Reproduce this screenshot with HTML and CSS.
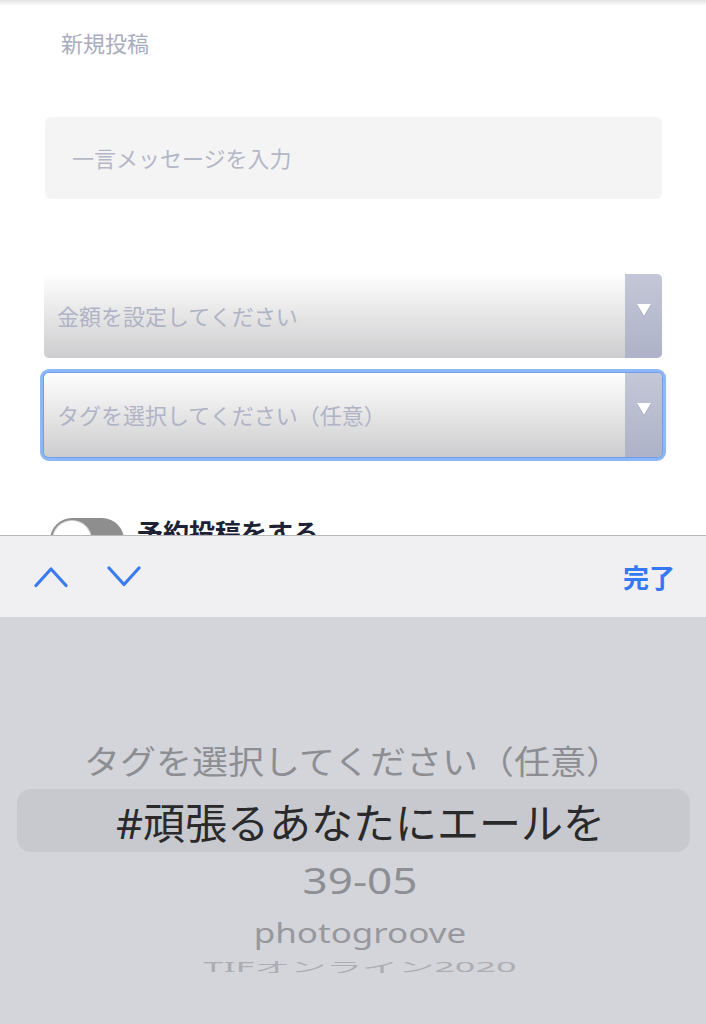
FILE: index.html
```html
<!DOCTYPE html>
<html lang="ja">
<head>
    <meta charset="UTF-8">
    <meta name="viewport" content="width=device-width, initial-scale=1.0">
    <title>新規投稿</title>
    <link rel="stylesheet" href="styles.css">
</head>
<body>
    <div class="top-shadow"></div>

    <main class="post-form">
        <h1 class="form-title">新規投稿</h1>

        <div class="message-box">一言メッセージを入力</div>

        <div class="select-box">
            <span class="select-label">金額を設定してください</span>
            <span class="select-arrow"></span>
        </div>

        <div class="select-box is-focused">
            <span class="select-label">タグを選択してください（任意）</span>
            <span class="select-arrow"></span>
        </div>

        <div class="schedule-row">
            <span class="toggle"><span class="toggle-knob"></span></span>
            <span class="schedule-label">予約投稿をする</span>
        </div>
    </main>

    <!-- iOS keyboard with the tag picker -->
    <div class="keyboard">
        <div class="keyboard-bar">
            <div class="nav-arrows">
                <svg class="nav-arrow" width="34" height="23" viewBox="0 0 34 23">
                    <path d="M2 20.5 L17 4 L32 20.5" />
                </svg>
                <svg class="nav-arrow" width="34" height="23" viewBox="0 0 34 23">
                    <path d="M2 3 L17 19.5 L32 3" />
                </svg>
            </div>
            <span class="done-btn">完了</span>
        </div>

        <div class="picker">
            <div class="picker-row row-near"><span>タグを選択してください（任意）</span></div>
            <div class="picker-row row-selected"><span>#頑張るあなたにエールを</span></div>
            <div class="picker-row row-next"><span>39-05</span></div>
            <div class="picker-row row-far"><span>photogroove</span></div>
            <div class="picker-row row-farthest"><span>TIFオンライン2020</span></div>
        </div>
    </div>
</body>
</html>
```

FILE: styles.css
```css
body {
    margin: 0;
    height: 1024px;
    overflow: hidden;
    background-color: #fff;
    font-family: "Noto Sans CJK JP", sans-serif;
}

.top-shadow {
    height: 6px;
    background: linear-gradient(#e3e3e5, #fff);
}

.post-form {
    padding: 0 44px 0 45px;
}

.form-title {
    margin: 21px 0 0 16px;
    font-size: 22px;
    line-height: 30px;
    font-weight: normal;
    color: #a9adc0;
}

.message-box {
    margin-top: 60px;
    height: 82px;
    padding: 0 0 3px 27px;
    box-sizing: border-box;
    display: flex;
    align-items: center;
    background-color: #f4f4f5;
    border-radius: 6px;
    font-size: 22px;
    color: #b4b7c6;
}

.select-box {
    margin-top: 75px;
    margin-left: -1px;
    height: 84px;
    display: flex;
    border-radius: 5px;
    background: linear-gradient(#fefefe, #cdcdcf);
    overflow: hidden;
}

.select-box.is-focused {
    margin-top: 15px;
    box-shadow: 0 0 0 1px #6f9fea, 0 0 0 4px #8cb8f7;
}

.select-label {
    flex: 1;
    padding: 0 0 3px 13px;
    display: flex;
    align-items: center;
    font-size: 22px;
    color: #b0b3c6;
}

.select-arrow {
    width: 37px;
    display: flex;
    justify-content: center;
    padding-top: 30px;
    box-sizing: border-box;
    background: linear-gradient(#c4c7d7, #adb2c8);
}

.select-arrow::after {
    content: "";
    width: 0;
    height: 0;
    border-left: 7px solid transparent;
    border-right: 7px solid transparent;
    border-top: 12px solid #fff;
    filter: drop-shadow(0 1px 0 rgba(90, 96, 120, 0.35));
}

.schedule-row {
    margin-top: 61px;
    margin-left: 5px;
    display: flex;
    align-items: flex-start;
    gap: 13px;
}

.toggle {
    width: 74px;
    height: 44px;
    border-radius: 22px;
    background-color: #8e8e8e;
    display: flex;
    align-items: center;
    padding-left: 3px;
    box-sizing: border-box;
}

.toggle-knob {
    width: 38px;
    height: 38px;
    border-radius: 50%;
    background-color: #fff;
    box-shadow: 0 0 0 1px #d4d4d4;
}

.schedule-label {
    font-size: 26px;
    line-height: 28px;
    font-weight: bold;
    color: #1e2235;
}

/* keyboard */

.keyboard {
    position: fixed;
    left: 0;
    right: 0;
    bottom: 0;
    height: 489px;
    display: flex;
    flex-direction: column;
}

.keyboard-bar {
    height: 81px;
    border-top: 1px solid #b8b8bc;
    background-color: #f0f0f2;
    display: flex;
    align-items: center;
    justify-content: space-between;
    padding: 0 31px 0 34px;
}

.nav-arrows {
    display: flex;
    gap: 39px;
}

.nav-arrow path {
    fill: none;
    stroke: #3a7bf1;
    stroke-width: 3.2;
    stroke-linecap: round;
    stroke-linejoin: round;
}

.done-btn {
    font-size: 26px;
    font-weight: bold;
    color: #3478f6;
}

.picker {
    flex: 1;
    background-color: #d4d5da;
    padding-top: 115px;
    font-family: "Noto Sans", "Noto Sans CJK JP", sans-serif;
}

.picker-row {
    display: flex;
    justify-content: center;
    align-items: center;
    padding-left: 14px;
    white-space: nowrap;
}

.picker-row span {
    display: inline-block;
}

.row-near {
    height: 57px;
    padding-left: 0;
    font-size: 36px;
    color: #8d8e93;
}

.row-near span {
    transform: scaleY(0.9);
}

.row-selected {
    height: 63px;
    margin: 0 16px 0 17px;
    border-radius: 14px;
    background-color: #c8c9ce;
    font-size: 42px;
    color: #2a2a2c;
}

.row-next {
    height: 56px;
    font-size: 44px;
    color: #8e8f94;
}

.row-next span {
    transform: scaleY(0.84);
}

.row-far {
    height: 48px;
    font-size: 35px;
    color: #97989d;
}

.row-far span {
    transform: scaleY(0.76);
}

.row-farthest {
    height: 20px;
    font-size: 36px;
    color: #acadb2;
}

.row-farthest span {
    transform: scaleY(0.38);
}
```
